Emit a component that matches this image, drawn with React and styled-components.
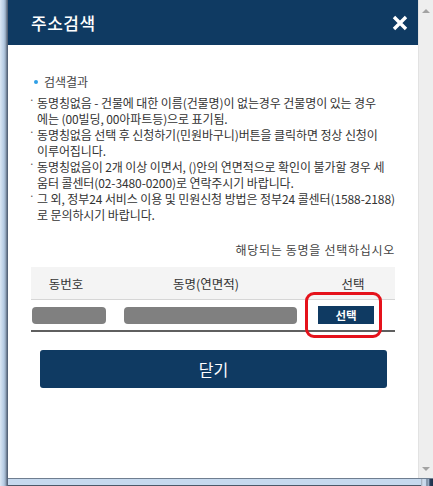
import styled, { createGlobalStyle } from 'styled-components';

const Global = createGlobalStyle`
  html, body { margin: 0; padding: 0; background: #1e2e44; }
  * { box-sizing: border-box; }
`;

const font = `"Noto Sans CJK KR", "Noto Sans", sans-serif`;

const Window = styled.div`
  width: 433px;
  height: 486px;
  display: flex;
  padding: 0 12px 7px 8px;
  background:
    linear-gradient(to right, #dbe7f4 0, #b5cbe3 4px, #8d9fb4 6px, #56657a 7px, #56657a 8px) left top / 8px 100% no-repeat,
    linear-gradient(to right, #9aa6b4 0, #cfdcec 2px, #c3d6ec 5px, #4e5d70 6px, #b9cde4 7px, #2a3f5c 9px, #1c2f49 12px) right top / 12px 100% no-repeat,
    linear-gradient(#4c5868, #4c5868) left bottom / 100% 1px no-repeat,
    #c6d9ee;
`;

const Frame = styled.div`
  flex: 1;
  display: flex;
  border-bottom: 1px solid #6f7e90;
  background: #fff;
`;

const Content = styled.div`
  flex: 1;
  display: flex;
  flex-direction: column;
  font-family: ${font};
  color: #333;
`;

const Header = styled.div`
  height: 45px;
  background: #0f3a62;
  display: flex;
  align-items: center;
  justify-content: space-between;
  padding: 0 10px 0 23px;
`;

const Title = styled.h1`
  margin: 0;
  font-size: 17px;
  font-weight: 500;
  color: #fff;
  letter-spacing: 0.5px;
`;

const CloseX = styled.button`
  width: 16px;
  height: 16px;
  padding: 0;
  border: 0;
  background: none;
  display: flex;
`;

const Body = styled.div`
  padding: 29px 23px 0;
  display: flex;
  flex-direction: column;
`;

const SectionTitle = styled.div`
  display: flex;
  align-items: center;
  gap: 6px;
  padding-left: 3px;
  font-size: 12px;
  line-height: 16px;
  color: #444;

  &::before {
    content: '';
    width: 4px;
    height: 4px;
    border-radius: 50%;
    background: #2f9fe6;
  }
`;

const Notes = styled.ul`
  list-style: none;
  margin: 5px 0 0 -2px;
  padding: 0;
  font-size: 12px;
  line-height: 16px;
  letter-spacing: -0.1px;
  color: #333;
`;

const Note = styled.li`
  display: flex;
  white-space: nowrap;
`;

const Dot = styled.span`
  width: 8px;
  flex: none;
  font-size: 10px;
  line-height: 10px;
  color: #555;
`;

const Hint = styled.div`
  margin-top: 19px;
  text-align: right;
  font-size: 12px;
  line-height: 16px;
  letter-spacing: 0.7px;
  color: #444;
`;

const Table = styled.div`
  margin-top: 9px;
  display: flex;
  flex-direction: column;
`;

const HeadRow = styled.div`
  display: grid;
  grid-template-columns: 84px 196px 1fr;
  height: 33px;
  align-items: center;
  background: #f4f4f4;
  border-bottom: 1px solid #d6d6d6;
  font-size: 12.5px;
  color: #333;
`;

const HeadCell = styled.div`
  text-align: center;
  padding-right: ${p => p.$shift || 0}px;
`;

const DataRow = styled.div`
  display: grid;
  grid-template-columns: 84px 196px 1fr;
  height: 32px;
  align-items: center;
  border-bottom: 2px solid #5f5f5f;
`;

const Cell = styled.div`
  position: relative;
  display: flex;
  padding-left: ${p => p.$indent}px;
`;

const Masked = styled.div`
  width: ${p => p.$w}px;
  height: 17px;
  border-radius: 4px;
  background: #808080;
`;

const PickButton = styled.button`
  width: 56px;
  height: 18px;
  padding: 0;
  border: 0;
  background: #0f3a62;
  color: #fff;
  font-family: ${font};
  font-size: 11.5px;
  font-weight: 700;
  line-height: 18px;
`;

const RedMark = styled.div`
  position: absolute;
  left: -6px;
  top: -14px;
  width: 77px;
  height: 46px;
  border: 3.5px solid #e5121b;
  border-radius: 9px;
  pointer-events: none;
`;

const CloseButton = styled.button`
  margin: 18px 8px 0 9px;
  height: 38px;
  border: 0;
  border-radius: 3px;
  background: #0f3a62;
  color: #fff;
  font-family: ${font};
  font-size: 16px;
`;

const Scrollbar = styled.div`
  width: 15px;
  background: #eeeeee;
  border-left: 1px solid #e2e2e2;
  display: flex;
  flex-direction: column;
  align-items: center;
  justify-content: space-between;
  padding: 9px 0 7px;
`;

const Arrow = styled.span`
  width: 0;
  height: 0;
  border-left: 4px solid transparent;
  border-right: 4px solid transparent;
  ${p => (p.$down ? 'border-top: 4px solid #a3a3a3;' : 'border-bottom: 4px solid #a3a3a3;')}
`;

const notes = [
  ['동명칭없음 - 건물에 대한 이름(건물명)이 없는경우 건물명이 있는 경우', '에는 (00빌딩, 00아파트등)으로 표기됨.'],
  ['동명칭없음 선택 후 신청하기(민원바구니)버튼을 클릭하면 정상 신청이', '이루어집니다.'],
  ['동명칭없음이 2개 이상 이면서, ()안의 연면적으로 확인이 불가할 경우 세', '움터 콜센터(02-3480-0200)로 연락주시기 바랍니다.'],
  ['그 외, 정부24 서비스 이용 및 민원신청 방법은 정부24 콜센터(1588-2188)', '로 문의하시기 바랍니다.'],
];

export default function App() {
  return (
    <>
      <Global />
      <Window>
        <Frame>
          <Content>
            <Header>
              <Title>주소검색</Title>
              <CloseX aria-label="닫기">
                <svg width="16" height="16" viewBox="0 0 16 16">
                  <path d="M2 2 L14 14 M14 2 L2 14" stroke="#fff" strokeWidth="3.4" />
                </svg>
              </CloseX>
            </Header>
            <Body>
              <SectionTitle>검색결과</SectionTitle>
              <Notes>
                {notes.map((lines, i) => (
                  <Note key={i}>
                    <Dot>·</Dot>
                    <span>
                      {lines[0]}
                      <br />
                      {lines[1]}
                    </span>
                  </Note>
                ))}
              </Notes>
              <Hint>해당되는 동명을 선택하십시오</Hint>
              <Table>
                <HeadRow>
                  <HeadCell $shift={14}>동번호</HeadCell>
                  <HeadCell $shift={14}>동명(연면적)</HeadCell>
                  <HeadCell>선택</HeadCell>
                </HeadRow>
                <DataRow>
                  <Cell $indent={1}><Masked $w={74} /></Cell>
                  <Cell $indent={9}><Masked $w={173} /></Cell>
                  <Cell $indent={7}>
                    <PickButton>선택</PickButton>
                    <RedMark />
                  </Cell>
                </DataRow>
              </Table>
              <CloseButton>닫기</CloseButton>
            </Body>
          </Content>
          <Scrollbar>
            <Arrow />
            <Arrow $down />
          </Scrollbar>
        </Frame>
      </Window>
    </>
  );
}
